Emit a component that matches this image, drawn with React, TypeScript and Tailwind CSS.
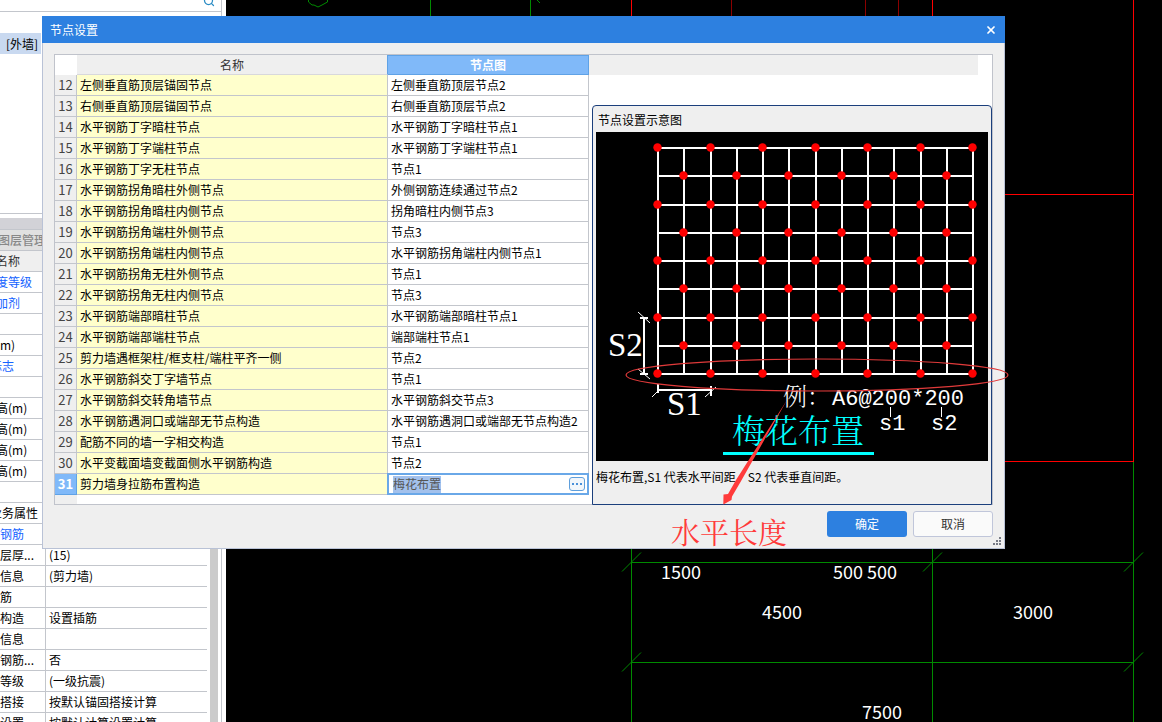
import { Search, X } from 'lucide-react';

type NodeRow = { no: number; name: string; node: string };

const rows: NodeRow[] = [
  { no: 12, name: '左侧垂直筋顶层锚固节点', node: '左侧垂直筋顶层节点2' },
  { no: 13, name: '右侧垂直筋顶层锚固节点', node: '右侧垂直筋顶层节点2' },
  { no: 14, name: '水平钢筋丁字暗柱节点', node: '水平钢筋丁字暗柱节点1' },
  { no: 15, name: '水平钢筋丁字端柱节点', node: '水平钢筋丁字端柱节点1' },
  { no: 16, name: '水平钢筋丁字无柱节点', node: '节点1' },
  { no: 17, name: '水平钢筋拐角暗柱外侧节点', node: '外侧钢筋连续通过节点2' },
  { no: 18, name: '水平钢筋拐角暗柱内侧节点', node: '拐角暗柱内侧节点3' },
  { no: 19, name: '水平钢筋拐角端柱外侧节点', node: '节点3' },
  { no: 20, name: '水平钢筋拐角端柱内侧节点', node: '水平钢筋拐角端柱内侧节点1' },
  { no: 21, name: '水平钢筋拐角无柱外侧节点', node: '节点1' },
  { no: 22, name: '水平钢筋拐角无柱内侧节点', node: '节点3' },
  { no: 23, name: '水平钢筋端部暗柱节点', node: '水平钢筋端部暗柱节点1' },
  { no: 24, name: '水平钢筋端部端柱节点', node: '端部端柱节点1' },
  { no: 25, name: '剪力墙遇框架柱/框支柱/端柱平齐一侧', node: '节点2' },
  { no: 26, name: '水平钢筋斜交丁字墙节点', node: '节点1' },
  { no: 27, name: '水平钢筋斜交转角墙节点', node: '水平钢筋斜交节点3' },
  { no: 28, name: '水平钢筋遇洞口或端部无节点构造', node: '水平钢筋遇洞口或端部无节点构造2' },
  { no: 29, name: '配筋不同的墙一字相交构造', node: '节点1' },
  { no: 30, name: '水平变截面墙变截面侧水平钢筋构造', node: '节点2' },
  { no: 31, name: '剪力墙身拉筋布置构造', node: '梅花布置' },
];

type Property = { name: string; value?: string; link?: boolean; shift?: string };

const properties: Property[] = [
  { name: '度等级', link: true, shift: '-ml-1' },
  { name: '加剂', link: true, shift: '-ml-1' },
  { name: '' },
  { name: 'm)' },
  { name: '标志', link: true, shift: '-ml-2.5' },
  { name: '' },
  { name: '高(m)', shift: '-ml-1' },
  { name: '高(m)', shift: '-ml-1' },
  { name: '高(m)', shift: '-ml-1' },
  { name: '高(m)', shift: '-ml-1' },
  { name: '' },
  { name: '业务属性', shift: '-ml-2.5' },
  { name: '钢筋', link: true },
  { name: '层厚...', value: '(15)' },
  { name: '信息', value: '(剪力墙)' },
  { name: '筋' },
  { name: '构造', value: '设置插筋' },
  { name: '信息' },
  { name: '钢筋...', value: '否' },
  { name: '等级', value: '(一级抗震)' },
  { name: '搭接', value: '按默认锚固搭接计算' },
  { name: '设置', value: '按默认计算设置计算' },
];

function Sidebar() {
  return (
    <aside className="flex h-full w-[226px] shrink-0 bg-white">
      <div className="flex w-[222px] flex-col border-r border-[#c3c6cc]">
        <div className="flex h-3 shrink-0 items-end justify-end border-b border-[#c3c6cc] pr-1.5">
          <Search className="mb-1 size-3 shrink-0 text-[#2a8bc4]" strokeWidth={2.5} />
        </div>
        <div className="h-[202px] shrink-0 border-b border-[#c3c6cc] pt-[21px]">
          <div className="h-[21px] w-[41px] bg-[#c9d9f0] pl-1.5 leading-[21px]">[外墙]</div>
        </div>
        <div className="mt-1 h-[11px] shrink-0 bg-[#d2d2d7]" />
        <div className="h-[22px] shrink-0 border-y border-[#c3c6cc] bg-[#e0e0e0] font-medium leading-[20px] text-[#888]">
          <span className="-ml-0.5">图层管理</span>
        </div>
        <div className="flex min-h-0 flex-1 overflow-hidden">
          <table className="w-[207px] table-fixed border-separate border-spacing-0 self-start">
            <thead>
              <tr className="h-[21px]">
                <th
                  scope="col"
                  className="w-[46px] border-b border-[#c3c6cc] bg-[#efefef] p-0 text-left font-normal text-[#333]"
                >
                  <span className="-ml-1">名称</span>
                </th>
                <th className="border-b border-[#c3c6cc] bg-[#efefef] p-0" />
              </tr>
            </thead>
            <tbody>
              {properties.map((p, i) => (
                <tr key={i} className="h-[21px]">
                  <td className="overflow-hidden whitespace-nowrap border-b border-r border-[#c3c6cc] p-0">
                    <span className={`${p.shift ?? ''} ${p.link ? 'text-[#1463ff]' : ''}`}>{p.name}</span>
                  </td>
                  <td className="whitespace-nowrap border-b border-[#c3c6cc] p-0 pl-[3px]">{p.value}</td>
                </tr>
              ))}
            </tbody>
          </table>
          <div className="ml-[3px] w-2 bg-[#cbcbcb]" />
        </div>
      </div>
    </aside>
  );
}

function CadCanvas() {
  return (
    <main className="h-full flex-1 overflow-hidden bg-black">
      <svg width="936" height="722" viewBox="226 0 936 722" className="font-['Noto_Sans_CJK_SC',sans-serif]">
        <g stroke="#008a00" fill="none" shapeRendering="crispEdges">
          <path d="M430.5 0V20M530.5 0V20M631.5 540V722M932.5 540V722M1133.5 461V722" />
          <path d="M631 562.5H1134M631 662.5H1134" />
        </g>
        <g stroke="#008a00" fill="none">
          <path d="M308.500 0V2L312 5H314L318 7L322 5L327.500 2V0M537 0L540 3" />
          <path d="M622 571.500L641 552.500M923 571.500L942 552.500M1124 571.500L1143 552.500" />
          <path d="M622 671.500L641 652.500M1124 671.500L1143 652.500" />
        </g>
        <g stroke="#ff0000" fill="none" shapeRendering="crispEdges">
          <path d="M631.5 0V20M932.5 0V20M1133.5 0V461M1000 194.500H1134M1000 461.500H1134" />
          <path d="M731.5 0V20M865.5 0V20M898.5 0V20" stroke="#8b0000" />
        </g>
        <g fill="#fff" fontSize="18">
          <text x="661" y="579">1500</text>
          <text x="833" y="579">500 500</text>
          <text x="762" y="619">4500</text>
          <text x="1013" y="619">3000</text>
          <text x="862" y="719">7500</text>
        </g>
      </svg>
    </main>
  );
}

const gridX = [62, 88, 115, 141, 167, 193, 220, 246, 272, 298, 325, 351, 377];
const gridY = [16, 44, 73, 101, 129, 157, 186, 214, 242];

function NodeDiagram() {
  return (
    <svg viewBox="0 0 392 329" className="block w-full bg-black" role="img" aria-label="梅花布置">
      <g stroke="#fff" strokeWidth="2" shapeRendering="crispEdges">
        {gridX.map((x) => (
          <line key={x} x1={x} x2={x} y1="16" y2="242" />
        ))}
        {gridY.map((y) => (
          <line key={y} x1="61" x2="378" y1={y} y2={y} />
        ))}
      </g>
      <g fill="#ff0000">
        {gridY.map((y, r) =>
          gridX.map((x, c) => (r % 2 === c % 2 ? <circle key={`${x}-${y}`} cx={x - 0.5} cy={y - 0.5} r="4.200" /> : null)),
        )}
      </g>
      <g stroke="#fff" fill="none">
        <path d="M48 186V242M62 258H115" strokeWidth="2" />
        <path d="M44 186H52M44 242H52M62 252V261M115 254V264" strokeWidth="2" />
        <path d="M42 180L54 191M42 237L54 247M56 265L64 257M109 265L120 255" />
        <path d="M294.500 275V285M345.500 275V285" />
      </g>
      <g fill="#fff" className="font-['Liberation_Serif',serif]">
        <text x="12" y="224" fontSize="33">S2</text>
        <text x="71" y="283" fontSize="33">S1</text>
      </g>
      <g fill="#fff" fontSize="22" className="font-['Liberation_Mono',monospace]">
        <text x="236" y="273">A6@200*200</text>
        <text x="283" y="298">s1</text>
        <text x="335" y="298">s2</text>
      </g>
      <g className="font-['Noto_Serif_CJK_SC','Noto_Sans_CJK_SC',serif] font-light">
        <text x="187" y="273" fontSize="24" fill="#fff">例：</text>
        <text x="136" y="311" fontSize="33" fill="#00ffff">梅花布置</text>
      </g>
      <rect x="127" y="320" width="151" height="3" fill="#00ffff" />
    </svg>
  );
}

function NodeTable() {
  return (
    <div className="flex w-[534px] shrink-0 flex-col">
      <table className="w-full table-fixed border-separate border-spacing-0">
        <colgroup>
          <col className="w-[22px]" />
          <col />
          <col className="w-[201px]" />
        </colgroup>
        <thead>
          <tr className="h-5">
            <td className="p-0" />
            <th
              scope="col"
              className="border-b border-r border-b-[#d8d8dc] border-r-[#5fa2e6] bg-[#efefef] p-0 font-normal text-[#333]"
            >
              名称
            </th>
            <th
              scope="col"
              className="border-b border-r border-t border-[#5fa2e6] bg-[#80b9f9] p-0 font-bold leading-[18px] text-white"
            >
              节点图
            </th>
          </tr>
        </thead>
        <tbody>
          {rows.map((row) => {
            const active = row.no === 31;
            return (
              <tr key={row.no} className="h-[21px]">
                <th
                  scope="row"
                  className={`border-b border-r p-0 text-center text-[13px] leading-[18px] ${
                    active
                      ? 'border-[#5fa2e6] bg-[#80b9f9] font-bold text-white'
                      : 'border-[#c3c6cc] bg-[#efefef] font-normal text-[#444]'
                  }`}
                >
                  {row.no}
                </th>
                <td className="whitespace-nowrap border-b border-r border-[#c3c6cc] bg-[#ffffcc] p-0 pl-[3px]">
                  {row.name}
                </td>
                {active ? (
                  <td className="p-0">
                    <div className="-ml-px -mt-px flex h-[22px] items-center justify-between border-2 border-[#6aa8e8] bg-white pl-1 pr-0.5">
                      <input
                        aria-label={row.name}
                        defaultValue={row.node}
                        className="h-[17px] w-12 bg-[#a3c1ec] text-[#555] outline-none"
                      />
                      <button
                        type="button"
                        aria-label="选择节点图"
                        className="flex h-3.5 w-4 items-center justify-center gap-0.5 rounded-[3px] border border-[#5f9fdc] bg-[#f2f6fb]"
                      >
                        <span className="size-0.5 bg-[#4a90d9]" />
                        <span className="size-0.5 bg-[#4a90d9]" />
                        <span className="size-0.5 bg-[#4a90d9]" />
                      </button>
                    </div>
                  </td>
                ) : (
                  <td className="whitespace-nowrap border-b border-r border-[#c3c6cc] bg-white p-0 pl-[3px]">
                    {row.node}
                  </td>
                )}
              </tr>
            );
          })}
        </tbody>
      </table>
      <div className="h-[9px] w-[22px] bg-[#efefef]" />
    </div>
  );
}

function PreviewPanel() {
  return (
    <div className="flex min-w-0 flex-1 flex-col">
      <div className="mr-3.5 h-5 bg-[#efefef]" />
      <section className="-mb-px ml-[3px] mt-[30px] flex-1 rounded-t-[4px] border border-[#1b3f7c] bg-[#efefef] px-[3px]">
        <h2 className="pl-0.5 pt-0.5 leading-6">节点设置示意图</h2>
        <NodeDiagram />
        <p className="leading-8">梅花布置,S1 代表水平间距，S2 代表垂直间距。</p>
      </section>
    </div>
  );
}

function SettingsDialog() {
  return (
    <div
      role="dialog"
      aria-labelledby="dialog-title"
      className="absolute left-[42px] top-4 w-[963px] border border-t-0 border-[#b9c2d6] bg-[#efefef]"
    >
      <header className="-mx-px flex h-[27px] items-center justify-between bg-[#2d80e0] pl-2 pr-2 text-white">
        <h1 id="dialog-title">节点设置</h1>
        <button type="button" aria-label="关闭">
          <X className="size-3" strokeWidth={3.5} />
        </button>
      </header>
      <div className="px-[11px] pt-[11px]">
        <div className="flex border border-[#c0c3cb] bg-white">
          <NodeTable />
          <PreviewPanel />
        </div>
      </div>
      <footer className="flex h-[43px] justify-end gap-1.5 pr-[11px] pt-1.5">
        <button type="button" className="h-[26px] w-20 rounded-[3px] bg-[#2d80e0] text-white">
          确定
        </button>
        <button
          type="button"
          className="h-[26px] w-20 rounded-[3px] border border-[#c0c6da] bg-[#fafafa] text-[#333]"
        >
          取消
        </button>
      </footer>
      <svg className="absolute bottom-[3px] right-[3px] size-2 text-[#777a85]" viewBox="0 0 8 8" fill="currentColor">
        <path d="M6 0h2v2H6zM6 3h2v2H6zM3 3h2v2H3zM6 6h2v2H6zM3 6h2v2H3zM0 6h2v2H0z" />
      </svg>
    </div>
  );
}

// Red pen marks drawn over the dialog: ellipse, arrow and caption.
function Annotation() {
  return (
    <svg
      width="400"
      height="200"
      viewBox="620 350 400 200"
      className="pointer-events-none absolute left-[620px] top-[350px]"
    >
      <ellipse cx="817" cy="375" rx="191" ry="16" fill="none" stroke="#e03a3a" strokeWidth="1.200" />
      <path
        d="M787 400L740.500 482L732 496.500L731.500 500L723.300 504.500L723.500 494.500L728 494L736 480Z"
        fill="#ff3b3b"
      />
      <text
        x="671"
        y="544"
        fontSize="29"
        fill="#ff3b3b"
        className="font-['Noto_Serif_CJK_SC','Noto_Sans_CJK_SC',serif]"
      >
        水平长度
      </text>
    </svg>
  );
}

export default function App() {
  return (
    <div className="relative flex h-screen overflow-hidden bg-black font-['Noto_Sans_CJK_SC',sans-serif] text-[12px] leading-[18px] text-black">
      <Sidebar />
      <CadCanvas />
      <SettingsDialog />
      <Annotation />
    </div>
  );
}
